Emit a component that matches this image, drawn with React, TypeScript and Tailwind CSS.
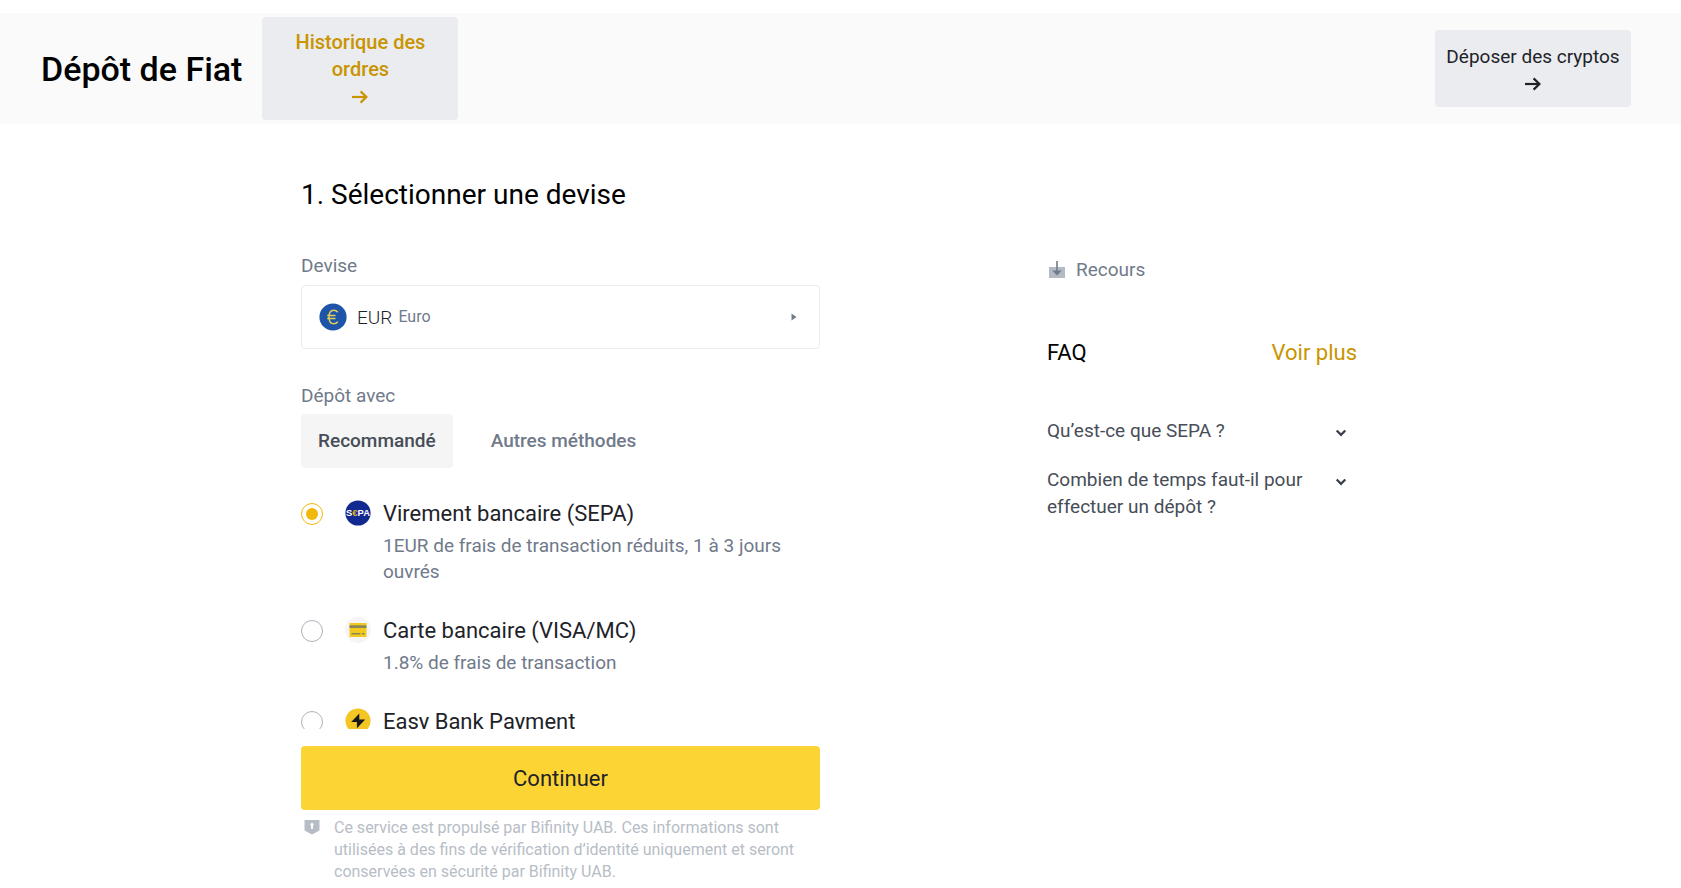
import { useState, type ReactNode } from "react";

function ArrowRight() {
  return (
    <svg viewBox="0 0 18 14" className="h-3.5 w-[18px]" fill="none" stroke="currentColor" strokeWidth="2.2" aria-hidden="true">
      <path d="M1 7h14.5" />
      <path d="M9.6 1.4 15.4 7l-5.8 5.6" />
    </svg>
  );
}

function EuroIcon() {
  return (
    <svg viewBox="0 0 28 28" className="size-7 shrink-0" aria-hidden="true">
      <circle cx="14" cy="14" r="13.6" fill="#1f55a8" />
      <path
        d="M18.8 9.2c-1.2-1.4-2.5-2-4.1-2-3 0-4.7 2.6-4.7 6.8s1.7 6.8 4.7 6.8c1.6 0 2.9-.6 4.1-2M8.2 12.5h8.3M8.2 15.6h8.3"
        fill="none"
        stroke="#e3cf57"
        strokeWidth="1.5"
      />
    </svg>
  );
}

function SepaIcon() {
  return (
    <svg viewBox="0 0 26 26" className="size-[26px]" aria-hidden="true">
      <circle cx="13" cy="13" r="12.6" fill="#12298f" />
      <text x="13" y="16.4" textAnchor="middle" fontFamily="Liberation Sans, sans-serif" fontWeight="700" fontSize="9.4" fill="#fff">
        S<tspan fill="#f0b323">€</tspan>PA
      </text>
    </svg>
  );
}

function CardIcon() {
  return (
    <svg viewBox="0 0 26 26" className="size-[26px]" aria-hidden="true">
      <circle cx="13" cy="13" r="13" fill="#f5f5f5" />
      <path d="M4.5 6h17v14h-17z" fill="#f3c81f" />
      <path d="M4.5 8.2h17v2.8h-17zM6.500 16h9v1.500h-9zM17 16h2.500v1.500H17z" fill="#8b8659" />
    </svg>
  );
}

function BoltIcon() {
  return (
    <svg viewBox="0 0 26 26" className="size-[26px]" aria-hidden="true">
      <circle cx="13" cy="13" r="12.6" fill="#f3c623" />
      <path d="M14.3 5.5v6h5.9l-8.3 8.7v-6.3H6.2z" fill="#16181c" />
    </svg>
  );
}

function ChevronDown() {
  return (
    <svg viewBox="0 0 12 8" className="h-2 w-3 shrink-0" fill="none" stroke="#3c424a" strokeWidth="2.3" aria-hidden="true">
      <path d="m1.7 1.5 4.3 4.3 4.3-4.3" />
    </svg>
  );
}

const methods: { id: string; title: string; note: string; icon: ReactNode }[] = [
  { id: "sepa", title: "Virement bancaire (SEPA)", note: "1EUR de frais de transaction réduits, 1 à 3 jours ouvrés", icon: <SepaIcon /> },
  { id: "card", title: "Carte bancaire (VISA/MC)", note: "1.8% de frais de transaction", icon: <CardIcon /> },
  { id: "easy", title: "Easy Bank Payment", note: "", icon: <BoltIcon /> },
];

const questions = ["Qu’est-ce que SEPA ?", "Combien de temps faut-il pour effectuer un dépôt ?"];

export default function App() {
  const [method, setMethod] = useState("sepa");

  return (
    <div className="bg-white pt-[13px] font-[Roboto,sans-serif] text-[19px] leading-[27px] text-[#1e2329]">
      <header className="flex items-center justify-between bg-[#fafafa] py-1 pr-[50px] pl-[41px]">
        <div className="flex items-center gap-5">
          <h1 className="text-[34px] leading-10 font-medium whitespace-nowrap text-black">Dépôt de Fiat</h1>
          <a href="#orders" className="flex w-[196px] flex-col items-center rounded bg-[#eaecef] px-6 pt-3 pb-2.5 text-center text-[20px] font-medium text-[#c99400]">
            Historique des ordres
            <span className="flex h-[27px] items-center"><ArrowRight /></span>
          </a>
        </div>
        <a href="#crypto" className="flex w-[196px] flex-col items-center rounded bg-[#eaecef] pt-[13px] pb-2.5 whitespace-nowrap">
          Déposer des cryptos
          <span className="flex h-[27px] items-center"><ArrowRight /></span>
        </a>
      </header>

      <main className="mx-auto flex max-w-[1079px] items-start justify-between">
        <section className="w-[519px]">
          <h2 className="mt-[51px] text-[28px] leading-10 text-black">1. Sélectionner une devise</h2>

          <p id="currency" className="mt-[37px] text-[#707a8a]">Devise</p>
          <button type="button" aria-haspopup="dialog" aria-describedby="currency" className="mt-1.5 flex h-16 w-full items-center rounded border border-[#eaecef] pr-[22px] pl-[17px] text-left">
            <EuroIcon />
            <span className="ml-2.5 font-light">EUR</span>
            <span className="ml-1.5 grow text-base text-[#707a8a]">Euro</span>
            <svg viewBox="0 0 6 8" className="h-2 w-1.5" fill="#707a8a" aria-hidden="true"><path d="M.5.5 5.5 4 .5 7.5z" /></svg>
          </button>

          <p className="mt-[33px] text-[#707a8a]">Dépôt avec</p>
          <div className="mt-[5px] flex gap-[22px] font-medium">
            <button type="button" className="h-[54px] rounded bg-[#f5f5f5] px-[17px] pb-0.5 text-[#474d57]">Recommandé</button>
            <button type="button" className="h-[54px] px-4 pb-0.5 text-[#707a8a]">Autres méthodes</button>
          </div>

          <div className="mt-[31px] h-[230px] overflow-y-auto [scrollbar-width:none]">
            {methods.map((m) => (
              <label key={m.id} className="mb-[31px] flex items-start">
                <input
                  type="radio"
                  name="method"
                  checked={method === m.id}
                  onChange={() => setMethod(m.id)}
                  className="mt-1 grid size-[22px] shrink-0 appearance-none place-content-center rounded-full border border-[#aeb4bc] before:size-3 before:rounded-full checked:border-[#f0b90b] checked:before:bg-[#f0b90b]"
                />
                <span className="mt-px ml-[22px] shrink-0">{m.icon}</span>
                <span className="ml-3 pr-6">
                  <span className="block text-[22px] leading-[30px]">{m.title}</span>
                  <span className="mt-1 block leading-[26px] text-[#707a8a]">{m.note}</span>
                </span>
              </label>
            ))}
          </div>

          <button type="button" className="mt-[17px] h-16 w-full rounded bg-[#fcd535] text-[22px]">Continuer</button>
          <div className="mt-[7px] flex items-start pl-[3px]">
            <svg viewBox="0 0 16 16" className="mt-0.5 size-4 shrink-0" aria-hidden="true">
              <path d="M.5 1h15v10.500L8 15.500.5 11.500z" fill="#b7bdc6" />
              <path d="M8 4a1.700 1.700 0 0 1 .9 3.100V10H7.100V7.100A1.700 1.700 0 0 1 8 4z" fill="#fff" />
            </svg>
            <p className="ml-[14px] text-base leading-[22px] text-[#b7bdc6]">
              Ce service est propulsé par Bifinity UAB. Ces informations sont utilisées à des fins de vérification d’identité uniquement et seront conservées en sécurité par Bifinity UAB.
            </p>
          </div>
        </section>

        <aside className="mt-[132px] mr-[23px] w-[310px]">
          <a href="#resources" className="flex items-center gap-[11px] pl-0.5 text-[#707a8a]">
            <svg viewBox="0 0 16 18" className="h-[18px] w-4" aria-hidden="true">
              <path d="M0 6h16v11H0z" fill="#b4bac3" />
              <path d="M7.200 0h1.600v9.500h4L8 14.500 3.200 9.500h4z" fill="#707a8a" />
            </svg>
            Recours
          </a>
          <div className="mt-[55px] flex items-center justify-between text-[22px] leading-[30px]">
            <h2 className="text-black">FAQ</h2>
            <a href="#more" className="text-[#c99400]">Voir plus</a>
          </div>
          <div className="mt-[49px] flex flex-col gap-[22px]">
            {questions.map((q) => (
              <button key={q} type="button" aria-expanded="false" className="flex items-start justify-between pr-2.5 text-left text-[#474d57]">
                <span className="w-[275px]">{q}</span>
                <span className="flex h-[27px] items-center pt-1"><ChevronDown /></span>
              </button>
            ))}
          </div>
        </aside>
      </main>
    </div>
  );
}
